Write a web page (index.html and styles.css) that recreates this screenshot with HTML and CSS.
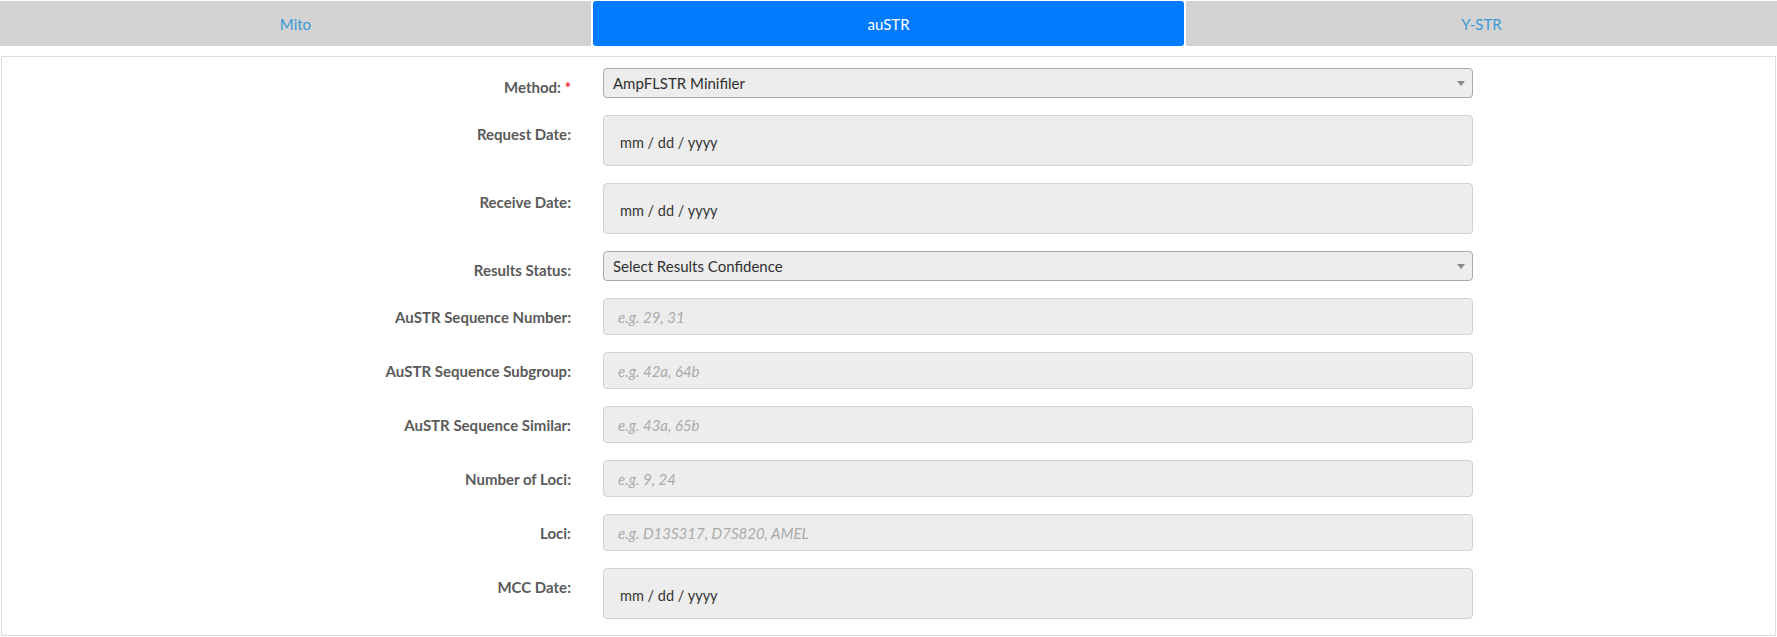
FILE: index.html
```html
<!DOCTYPE html>
<html lang="en">
<head>
<meta charset="utf-8">
<title>auSTR</title>
<link rel="stylesheet" href="styles.css">
</head>
<body>
<nav class="tabs">
  <a class="tab">Mito</a>
  <a class="tab active">auSTR</a>
  <a class="tab">Y-STR</a>
</nav>
<section class="card">
  <form class="form">
    <label class="lbl">Method: <span class="req">*</span></label>
    <div class="field sel-wrap"><div class="ctl sel">AmpFLSTR Minifiler</div></div>

    <label class="lbl">Request Date:</label>
    <div class="field"><div class="ctl date">mm / dd / yyyy</div></div>

    <label class="lbl">Receive Date:</label>
    <div class="field"><div class="ctl date">mm / dd / yyyy</div></div>

    <label class="lbl">Results Status:</label>
    <div class="field sel-wrap"><div class="ctl sel">Select Results Confidence</div></div>

    <label class="lbl">AuSTR Sequence Number:</label>
    <div class="field"><input class="ctl txt" placeholder="e.g. 29, 31"></div>

    <label class="lbl">AuSTR Sequence Subgroup:</label>
    <div class="field"><input class="ctl txt" placeholder="e.g. 42a, 64b"></div>

    <label class="lbl">AuSTR Sequence Similar:</label>
    <div class="field"><input class="ctl txt" placeholder="e.g. 43a, 65b"></div>

    <label class="lbl">Number of Loci:</label>
    <div class="field"><input class="ctl txt" placeholder="e.g. 9, 24"></div>

    <label class="lbl">Loci:</label>
    <div class="field"><input class="ctl txt" placeholder="e.g. D13S317, D7S820, AMEL"></div>

    <label class="lbl">MCC Date:</label>
    <div class="field"><div class="ctl date">mm / dd / yyyy</div></div>
  </form>
</section>
</body>
</html>
```

FILE: styles.css
```css
* { box-sizing: border-box; }

html, body {
  margin: 0;
  padding: 0;
  background: #fff;
  font-family: Lato, "Open Sans", sans-serif;
}

.tabs {
  display: grid;
  grid-template-columns: 1fr 1fr 1fr;
  column-gap: 2px;
  padding-top: 1px;
}

.tab {
  height: 45px;
  display: flex;
  align-items: center;
  justify-content: center;
  background: #d3d3d3;
  color: #3a97d4;
  font-size: 15px;
}

.tab.active {
  background: #007bff;
  color: #fff;
  border-radius: 3px;
}

.card {
  margin: 10px 1px 0 1px;
  border: 1px solid #dcdcdc;
  padding: 11px 0 16px 0;
}

.form {
  display: grid;
  grid-template-columns: 569px 870px;
  column-gap: 32px;
  row-gap: 17px;
}

.lbl {
  text-align: right;
  font-weight: 700;
  font-size: 15px;
  line-height: 20px;
  color: #5a5a5a;
  padding-top: 9px;
}

.req { color: #e8262b; }

.field { position: relative; }

.ctl {
  display: flex;
  align-items: center;
  width: 100%;
  margin: 0;
  background: #ededed;
  border: 1px solid #d2d2d2;
  border-radius: 4px;
  font-family: Lato, "Open Sans", sans-serif;
  font-size: 15px;
  color: #333;
}

.sel {
  height: 30px;
  border-color: #a9a9a9;
  padding-left: 9px;
  color: #2f2f2f;
}

.sel-wrap::after {
  content: "";
  position: absolute;
  right: 8px;
  top: 13px;
  border-left: 4px solid transparent;
  border-right: 4px solid transparent;
  border-top: 5px solid #888;
}

.date {
  height: 51px;
  padding-left: 16px;
  padding-top: 3px;
  font-size: 14.5px;
  color: #333;
}

.txt {
  height: 37px;
  padding: 0 14px;
  outline: none;
}

.txt::placeholder {
  color: #aaa;
  font-style: italic;
}
```
